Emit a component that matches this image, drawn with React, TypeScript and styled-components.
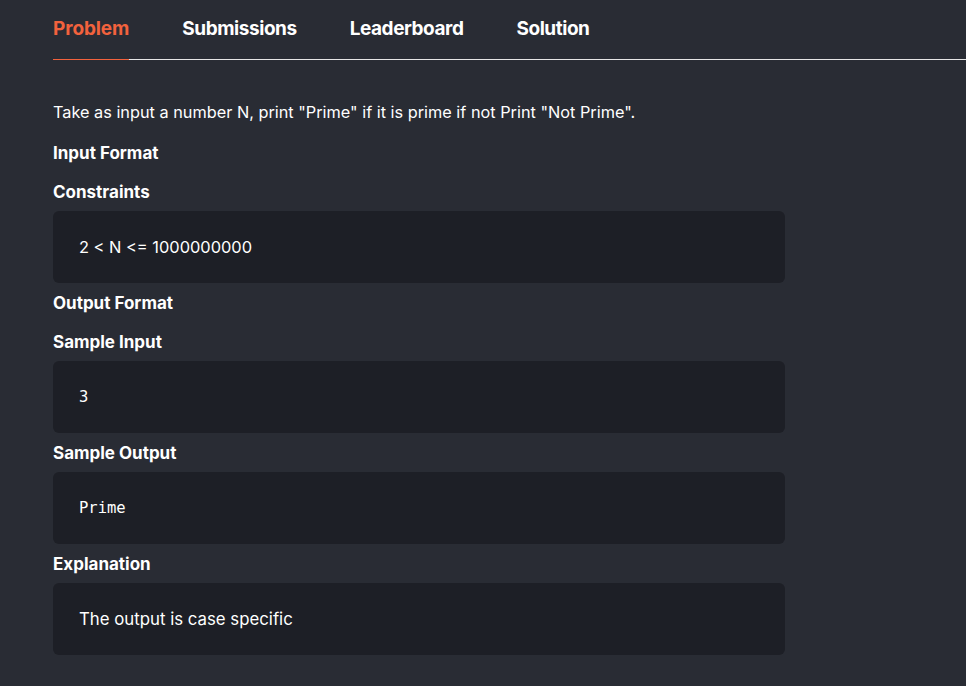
import React from "react";
import styled, { createGlobalStyle } from "styled-components";

const Global = createGlobalStyle`
  html, body { margin: 0; padding: 0; background: #292c34; }
  body { font-family: Inter, "Noto Sans", sans-serif; color: #ffffff; }
  * { box-sizing: border-box; }
`;

const Page = styled.div`
  min-height: 686px;
  background: #292c34;
  padding-left: 53px;
`;

const TabBar = styled.nav`
  display: flex;
  gap: 53px;
  height: 60px;
  border-bottom: 1px solid #e6e6e6;
`;

const Tab = styled.div<{ $active?: boolean }>`
  display: flex;
  align-items: center;
  font-size: 19px;
  font-weight: 700;
  letter-spacing: ${(p) => (p.$active ? "-0.1px" : "-0.45px")};
  color: ${(p) => (p.$active ? "#f2623d" : "#ffffff")};
  position: relative;
  padding-bottom: 2px;
  &::after {
    content: "";
    position: absolute;
    left: 0;
    right: 0;
    bottom: -1px;
    height: 1px;
    background: ${(p) => (p.$active ? "#f2623d" : "transparent")};
  }
`;

const Body = styled.div`
  width: 732px;
  padding-top: 41px;
  display: flex;
  flex-direction: column;
`;

const Paragraph = styled.p`
  margin: 0;
  font-size: 16.3px;
  line-height: 22px;
  padding-bottom: 10px;
  letter-spacing: 0;
`;

const Heading = styled.h3`
  margin: 0;
  font-size: 17px;
  font-weight: 700;
  line-height: 22px;
  padding: 9px 0 8px;
  letter-spacing: 0;
`;

const Box = styled.div<{ $mono?: boolean; $size?: number }>`
  background: #1d1f26;
  border-radius: 6px;
  height: 72px;
  padding: 0 26px;
  display: flex;
  align-items: center;
  font-size: ${(p) => (p.$mono ? 15.5 : p.$size ?? 16.8)}px;
  font-family: ${(p) =>
    p.$mono ? '"DejaVu Sans Mono", "Liberation Mono", monospace' : 'Inter, "Noto Sans", sans-serif'};
  letter-spacing: 0;
`;

export default function App() {
  return (
    <>
      <Global />
      <Page>
        <TabBar>
          <Tab $active>Problem</Tab>
          <Tab>Submissions</Tab>
          <Tab>Leaderboard</Tab>
          <Tab>Solution</Tab>
        </TabBar>
        <Body>
          <Paragraph>
            Take as input a number N, print "Prime" if it is prime if not Print "Not Prime".
          </Paragraph>
          <Heading>Input Format</Heading>
          <Heading>Constraints</Heading>
          <Box $size={16.4}>2 &lt; N &lt;= 1000000000</Box>
          <Heading>Output Format</Heading>
          <Heading>Sample Input</Heading>
          <Box $mono>3</Box>
          <Heading>Sample Output</Heading>
          <Box $mono>Prime</Box>
          <Heading>Explanation</Heading>
          <Box>The output is case specific</Box>
        </Body>
      </Page>
    </>
  );
}
